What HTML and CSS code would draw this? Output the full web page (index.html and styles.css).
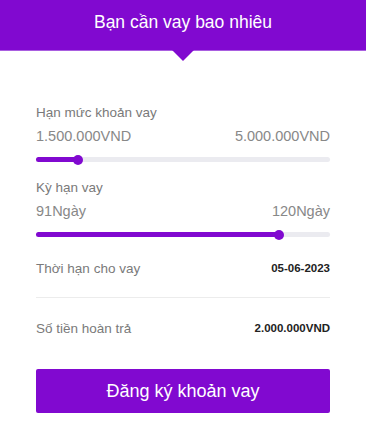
FILE: index.html
```html
<!DOCTYPE html>
<html lang="vi">
<head>
<meta charset="utf-8">
<link rel="stylesheet" href="styles.css">
</head>
<body>
<div class="card">
  <div class="header">
    <div class="title">Bạn cần vay bao nhiêu</div>
    <div class="arrow"></div>
  </div>
  <div class="body">
    <div class="group">
      <div class="label">Hạn mức khoản vay</div>
      <div class="range-values"><span>1.500.000VND</span><span>5.000.000VND</span></div>
      <div class="slider"><div class="fill" style="width: 14.3%"><span class="thumb"></span></div></div>
    </div>
    <div class="group second">
      <div class="label">Kỳ hạn vay</div>
      <div class="range-values"><span>91Ngày</span><span>120Ngày</span></div>
      <div class="slider"><div class="fill" style="width: 82.6%"><span class="thumb"></span></div></div>
    </div>
    <div class="row first-row"><span class="row-label">Thời hạn cho vay</span><span class="row-value">05-06-2023</span></div>
    <div class="divider"></div>
    <div class="row"><span class="row-label">Số tiền hoàn trả</span><span class="row-value">2.000.000VND</span></div>
    <button class="submit">Đăng ký khoản vay</button>
  </div>
</div>
</body>
</html>
```
FILE: styles.css
```css
* { box-sizing: border-box; }
html, body { margin: 0; padding: 0; background: #fff; }
body { font-family: "Liberation Sans", Arial, sans-serif; }
.card { width: 366px; }
.header {
  position: relative;
  height: 51px;
  background: #8109d0;
  border-bottom: 1px solid #a95ee0;
}
.title {
  color: #fff;
  font-size: 17.5px;
  text-align: center;
  padding-top: 12px;
  line-height: 21px;
}
.arrow {
  position: absolute;
  left: 172px;
  top: 50px;
  width: 0; height: 0;
  border-left: 11px solid transparent;
  border-right: 11px solid transparent;
  border-top: 11px solid #8109d0;
}
.body { padding: 0 36px; }
.group { padding-top: 52px; }
.group.second { padding-top: 16px; }
.label { color: #7a7a7a; font-size: 13.5px; line-height: 20px; }
.range-values {
  display: flex; justify-content: space-between;
  color: #888; font-size: 14.5px; line-height: 20px; margin-top: 3px;
}
.slider {
  margin-top: 11px;
  height: 5px; border-radius: 3px; background: #ebebf0;
  position: relative;
}
.fill { height: 5px; border-radius: 3px; background: #8109d0; position: relative; }
.thumb {
  position: absolute; right: -5px; top: -2.5px;
  width: 10px; height: 10px; border-radius: 50%; background: #8109d0;
}
.row {
  display: flex; justify-content: space-between; align-items: center;
  height: 20px;
}
.first-row { margin-top: 21px; }
.row-label { color: #7a7a7a; font-size: 13.5px; }
.row-value { color: #222; font-size: 11.5px; font-weight: bold; }
.divider { height: 1px; background: #ececec; margin: 19px 0 20px; }
.submit {
  display: block; width: 100%; height: 44px; margin-top: 31px;
  background: #8109d0; color: #fff; border: none; border-radius: 2px;
  font-family: "Liberation Sans", Arial, sans-serif; font-size: 18px;
}
```
